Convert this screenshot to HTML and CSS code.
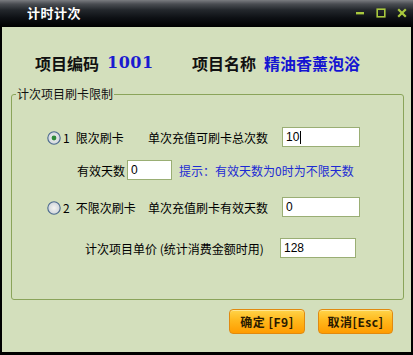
FILE: index.html
```html
<!DOCTYPE html>
<html lang="zh">
<head>
<meta charset="utf-8">
<title>计时计次</title>
<link rel="stylesheet" href="styles.css">
</head>
<body>
<div class="window">
  <div class="titlebar">
    <span class="title">计时计次</span>
    <div class="controls">
      <svg class="ctl" width="10" height="10" viewBox="0 0 10 10"><rect x="1" y="4" width="8" height="2.4" fill="#a9c83e"/></svg>
      <svg class="ctl" width="10" height="10" viewBox="0 0 10 10"><rect x="1.2" y="1.2" width="7.6" height="7.6" fill="none" stroke="#a9c83e" stroke-width="1.6"/></svg>
      <svg class="ctl" width="10" height="10" viewBox="0 0 10 10"><path d="M1.2 1.2 L8.8 8.8 M8.8 1.2 L1.2 8.8" stroke="#a9c83e" stroke-width="2.2"/></svg>
    </div>
  </div>
  <div class="content">
    <div class="header">
      <span class="hlabel">项目编码</span>
      <span class="hcode">1001</span>
      <span class="hlabel hlabel2">项目名称</span>
      <span class="hname">精油香薰泡浴</span>
    </div>
    <div class="group">
      <span class="legend">计次项目刷卡限制</span>
      <div class="row row1">
        <div class="opt">
          <svg class="radio" width="14" height="14" viewBox="0 0 14 14">
            <defs><radialGradient id="rg1" cx="0.5" cy="0.5" r="0.6"><stop offset="0" stop-color="#f4f4f0"/><stop offset="1" stop-color="#c8cfd8"/></radialGradient></defs>
            <circle cx="7" cy="7" r="6.2" fill="url(#rg1)" stroke="#4b6a8e" stroke-width="1.1"/>
            <circle cx="7" cy="7" r="2.4" fill="#2e8a3a"/>
          </svg>
          <span class="num">1</span><span>限次刷卡</span>
        </div>
        <span class="desc">单次充值可刷卡总次数</span>
        <div class="field wide">10<span class="caret"></span></div>
      </div>
      <div class="row row2">
        <span class="lbl2">有效天数</span>
        <div class="field small">0</div>
        <span class="hint">提示：有效天数为0时为不限天数</span>
      </div>
      <div class="row row3">
        <div class="opt">
          <svg class="radio" width="14" height="14" viewBox="0 0 14 14">
            <defs><radialGradient id="rg2" cx="0.5" cy="0.5" r="0.6"><stop offset="0" stop-color="#f4f4f0"/><stop offset="1" stop-color="#c8cfd8"/></radialGradient></defs>
            <circle cx="7" cy="7" r="6.2" fill="url(#rg2)" stroke="#4b6a8e" stroke-width="1.1"/>
          </svg>
          <span class="num">2</span><span>不限次刷卡</span>
        </div>
        <span class="desc">单次充值刷卡有效天数</span>
        <div class="field wide">0</div>
      </div>
      <div class="row row4">
        <span class="lbl4">计次项目单价 (统计消费金额时用)</span>
        <div class="field mid">128</div>
      </div>
    </div>
    <div class="buttons">
      <div class="btn">确定 [F9]</div>
      <div class="btn btn2">取消[Esc]</div>
    </div>
  </div>
</div>
</body>
</html>
```
FILE: styles.css
```css
* { box-sizing: border-box; }
html, body { margin: 0; padding: 0; background: #000; }
body {
  font-family: "Noto Sans CJK SC", "Liberation Sans", sans-serif;
  font-size: 12px;
  color: #000;
}
.window {
  width: 413px;
  height: 355px;
  background: #000;
  display: flex;
  flex-direction: column;
}
.titlebar {
  height: 27px;
  display: flex;
  align-items: center;
  justify-content: space-between;
  padding: 0 6px 0 27px;
  background: linear-gradient(#7a7c80 0px, #4a4d52 4px, #23272c 10px, #0d1014 18px, #000 27px);
}
.title {
  color: #fff;
  font-weight: bold;
  font-size: 13px;
  line-height: 16px;
  margin-top: -1px;
  letter-spacing: 0.5px;
}
.controls {
  display: flex;
  gap: 11px;
  align-items: center;
  margin-top: -2px;
}
.ctl { display: block; }
.content {
  height: 325px;
  margin: 0 2px;
  background: #d3dfbc;
  display: flex;
  flex-direction: column;
}
.header {
  margin-top: 26px;
  height: 20px;
  display: flex;
  align-items: center;
  padding-left: 33px;
  font-weight: bold;
  font-size: 16px;
  line-height: 20px;
}
.hlabel { color: #111; width: 72px; }
.hlabel2 { width: 72px; }
.hcode {
  color: #1a1ad0;
  font-family: "DejaVu Serif", "Liberation Serif", serif;
  font-size: 16px;
  width: 85px;
  letter-spacing: 0.5px;
}
.hname { color: #1414d2; }
.group {
  position: relative;
  margin: 21px 7px 0 9px;
  height: 206px;
  border: 1px solid #8aa45a;
  border-radius: 3px;
  padding-top: 32px;
}
.legend {
  position: absolute;
  top: -9px;
  left: 4px;
  padding: 0 1px;
  background: #d3dfbc;
  line-height: 16px;
  color: #111;
}
.row {
  display: flex;
  align-items: center;
  height: 20px;
}
.row1 { padding-left: 35px; }
.row2 { margin-top: 13px; padding-left: 65px; }
.row3 { margin-top: 17px; padding-left: 35px; }
.row4 { margin-top: 21px; padding-left: 73px; }
.opt {
  width: 101px;
  display: flex;
  align-items: center;
}
.radio { display: block; margin-top: 2px; }
.num { margin: 0 6px 0 2px; }
.desc { width: 134px; }
.field {
  height: 20px;
  background: #fff;
  border: 1px solid #9aae74;
  padding: 0 3px;
  line-height: 18px;
  display: flex;
  align-items: center;
  font-family: "Liberation Sans", sans-serif;
  font-size: 12px;
}
.wide { width: 78px; }
.small { width: 45px; }
.mid { width: 76px; }
.caret {
  display: inline-block;
  width: 1px;
  height: 13px;
  background: #000;
  margin-left: 1px;
}
.lbl2 { width: 50px; }
.hint { margin-left: 7px; color: #1c2ad4; }
.lbl4 { width: 195px; }
.buttons {
  display: flex;
  justify-content: flex-end;
  gap: 13px;
  margin-top: 9px;
  padding-right: 18px;
}
.btn {
  width: 76px;
  height: 25px;
  border: 1px solid #e08a10;
  border-radius: 4px;
  background: linear-gradient(#ffd44a 0%, #ffb81c 45%, #ff9c00 100%);
  box-shadow: inset 0 1px 0 #ffe690;
  font-weight: bold;
  font-size: 12px;
  color: #2a1a00;
  display: flex;
  align-items: center;
  justify-content: center;
  letter-spacing: 0.5px;
}
.btn2 { width: 75px; }
```
